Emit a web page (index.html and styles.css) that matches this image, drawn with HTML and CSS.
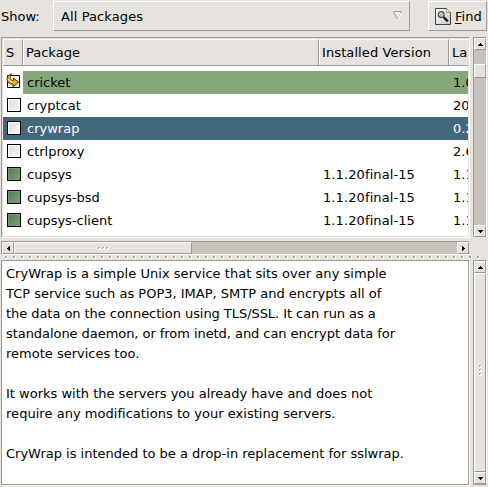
FILE: index.html
```html
<!DOCTYPE html>
<html lang="en">
<head>
<meta charset="utf-8">
<title>Packages</title>
<link rel="stylesheet" href="styles.css">
</head>
<body>
<header class="toolbar">
  <span class="label">Show:</span>
  <div class="combo raised"><span class="wide">All Packages</span>
    <svg class="drop" width="10" height="11" viewBox="0 0 10 11"><path d="M.5.5h8L4.5 8.7z" fill="#eeece8" stroke="#a39f97"/><path d="M4.5 9.5l4-8" stroke="#fff" fill="none"/></svg>
  </div>
  <button class="find raised">
    <svg width="18" height="19" viewBox="0 0 18 19">
      <defs><linearGradient id="paper" x2="1" y2="1"><stop stop-color="#fff"/><stop offset="1" stop-color="#c4c4c4"/></linearGradient></defs>
      <path d="M1.5 1.5h11l4 4v12h-15z" fill="url(#paper)" stroke="#45423c"/>
      <path d="M12.5 1.5v4h4" fill="#eee" stroke="#77736d" stroke-width=".7"/>
      <path d="M9.5 10l4.3 4.4" stroke="#161616" stroke-width="2.3"/>
      <circle cx="7.2" cy="7.6" r="3" fill="#b8bda6" stroke="#4e4e4a" stroke-width="1.1"/>
      <path d="M5.6 7.4l1.3-1.3" stroke="#fff"/>
    </svg>
    <span><u>F</u>ind</span>
  </button>
</header>
<main>
  <section class="pane list-pane">
    <div class="list">
      <div class="row head"><span>S</span><span>Package</span><span class="wide">Installed Version</span><span>Latest</span></div>
      <div class="rows">
        <div class="row upgrade"><span><svg class="up" width="17" height="17" viewBox="0 0 17 17"><path d="M2.5 3.5h12v12h-12z" fill="#eee" stroke="#000"/><path d="M6.5 1.8C1 3 .5 10 5.5 11.8L8 12v2.8l5.5-4.6L8.5 6v2.7C5 8.5 4 5 6.5 1.8z" fill="#e6ae27" stroke="#49350b"/><path d="M3.5 7c.5 2.2 2 3.2 5 3.2" fill="none" stroke="#ffe27b"/></svg></span><span>cricket</span><span></span><span>1.0.5</span></div>
        <div class="row"><span><i class="box"></i></span><span>cryptcat</span><span></span><span>20031202</span></div>
        <div class="row selected"><span><i class="box"></i></span><span>crywrap</span><span></span><span>0.2.1</span></div>
        <div class="row"><span><i class="box"></i></span><span>ctrlproxy</span><span></span><span>2.6.2</span></div>
        <div class="row"><span><i class="box on"></i></span><span>cupsys</span><span class="wide">1.1.20final-15</span><span>1.1.20</span></div>
        <div class="row"><span><i class="box on"></i></span><span>cupsys-bsd</span><span class="wide">1.1.20final-15</span><span>1.1.20</span></div>
        <div class="row"><span><i class="box on"></i></span><span>cupsys-client</span><span class="wide">1.1.20final-15</span><span>1.1.20</span></div>
      </div>
    </div>
    <div class="vbar">
      <div class="btn"><svg width="5" height="3"><path d="M2 0h1v1h1v1h1v1H0V2h1V1h1z"/></svg></div>
      <div class="gap"></div><div class="thumb"></div><div class="trough"></div>
      <div class="btn"><svg width="5" height="3"><path d="M0 0h5v1H4v1H3v1H2V2H1V1H0z"/></svg></div>
    </div>
  </section>
  <div class="hbar">
    <div class="btn"><svg width="3" height="5"><path d="M3 0v5H2V4H1V3H0V2h1V1h1V0z"/></svg></div>
    <div class="thumb"><i class="dot"></i><i class="dot"></i><i class="dot"></i></div><div class="trough"></div>
    <div class="btn"><svg width="3" height="5"><path d="M0 0v5h1V4h1V3h1V2H2V1H1V0z"/></svg></div>
  </div>
  <div class="splitter"></div>
  <section class="pane">
    <div class="description">
      <p><span class="loose">CryWrap is a simple Unix service that sits over any simple</span><br>TCP service such as POP3, IMAP, SMTP and encrypts all of<br><span class="tight">the data on the connection using TLS/SSL. It can run as a</span><br><span class="tight">standalone daemon, or from inetd, and can encrypt data for</span><br>remote services too.</p>
      <p>It works with the servers you already have and does not<br><span class="loose">require any modifications to your existing servers.</span></p>
      <p>CryWrap is intended to be a drop-in replacement for sslwrap.</p>
    </div>
    <div class="vbar full">
      <div class="btn"><svg width="5" height="3"><path d="M2 0h1v1h1v1h1v1H0V2h1V1h1z"/></svg></div>
      <div class="thumb"><i class="dot"></i><i class="dot"></i><i class="dot"></i></div>
      <div class="btn"><svg width="5" height="3"><path d="M0 0h5v1H4v1H3v1H2V2H1V1H0z"/></svg></div>
    </div>
  </section>
</main>
</body>
</html>
```
FILE: styles.css
```css
* { box-sizing: border-box; }
body {
  margin: 0; width: 488px; height: 487px; overflow: hidden;
  background: #e6e3de; color: #000;
  font: 13px/20px "DejaVu Sans", sans-serif;
}
svg { display: block; flex: none; }
.wide { letter-spacing: .1px; }
.loose { letter-spacing: .035px; }
.tight { letter-spacing: -.055px; }
.toolbar { display: flex; height: 37px; padding: 1px 1px 0 1px; align-items: flex-start; }
.label { width: 52px; line-height: 32px; }
.raised {
  height: 30px; border: 1px solid #fff;
  border-right-color: #9c9a94; border-bottom-color: #9c9a94;
  display: flex; align-items: center;
}
.combo { width: 357px; padding: 1px 6px 0 7px; justify-content: space-between; }
.drop { margin-top: -1px; }
.find { margin-left: 18px; width: 59px; padding: 1px 0 0 5px; gap: 3px; background: none; color: #000; font: inherit; }
.find svg { margin-top: -1px; }
.find u { text-underline-offset: 2px; }
main { padding-left: 1px; }
.pane { display: flex; gap: 3px; height: 226px; }
.list-pane { height: 201px; }
.list {
  width: 469px; background: #fff; overflow: hidden;
  border: 1px solid #9c9a94; border-right-color: #fff; border-bottom-color: #fff;
  box-shadow: inset 0 0 0 1px #e6e3de; padding: 1px;
}
.row { display: grid; grid-template-columns: 20px 296px 130px 19px; height: 23px; line-height: 23px; white-space: nowrap; }
.row span { overflow: hidden; padding-left: 4px; }
.head { height: 27px; line-height: 26px; background: #e6e3de; border-bottom: 1px solid #9c9a94; }
.head span { padding-left: 2px; border-left: 1px solid #fff; border-top: 1px solid #fff; border-right: 1px solid #9c9a94; line-height: 25px; }
.head span:last-child { border-right: 0; }
.rows { padding-top: 5px; }
.row span:first-child { padding-left: 4px; }
.head span:first-child { padding-left: 2px; }
.upgrade { background: linear-gradient(to right, #fff 20px, #86a77d 20px); }
.selected { background: #44687b; color: #fff; }
.box { display: block; width: 14px; height: 14px; margin-top: 4px; border: 1px solid #000; background: linear-gradient(135deg, #dcdcdc, #f8f8f8); box-shadow: inset 0 0 0 1px #fff; }
.box.on { background: linear-gradient(135deg, #577b51, #7ba176); box-shadow: inset 0 0 0 1px #739b6e; }
.row .up { margin: 1px 0 0 -2px; }
.vbar {
  width: 14px; display: flex; flex-direction: column; background: #c6c2bb;
  border: 1px solid #9c9a94; border-right: 1px solid #fff; border-bottom: 0;
}
.list-pane .vbar { height: 200px; }
.btn, .thumb {
  background: #e6e3de; border: 1px solid #fff;
  border-right-color: #9c9a94; border-bottom-color: #9c9a94;
  display: flex; align-items: center; justify-content: center;
}
.btn { flex: none; width: 12px; height: 12px; }
.gap { height: 14px; }
.list-pane .thumb { height: 14px; }
.trough { flex: 1; }
.full .thumb { flex: 1; flex-direction: column; gap: 1px; padding-bottom: 4px; }
.full { height: 225px; border-bottom: 1px solid #9c9a94; }
.dot { width: 3px; height: 3px; background: linear-gradient(#a9a59e, #a9a59e) 0 0 / 2px 1px no-repeat, linear-gradient(#a9a59e, #a9a59e) 0 0 / 1px 2px no-repeat, #fff; }
.hbar { display: flex; width: 468px; height: 14px; margin-top: 3px; background: #c6c2bb; border: 1px solid #9c9a94; border-right: 0; border-bottom-color: #fff; }
.hbar .thumb { width: 178px; gap: 1px; }
.splitter {
  height: 3px; margin: 1px 0 1px 4px; width: 475px;
  background:
    repeating-linear-gradient(to right, #a9a59e 0 2px, transparent 2px 8px) 0 0 / 100% 2px no-repeat,
    repeating-linear-gradient(to right, #fff 0 3px, transparent 3px 8px);
}
.description {
  width: 469px; background: #fff; border: 1px solid #9c9a94;
  border-right: 1px solid #fff; border-bottom: 1px solid #fff;
  box-shadow: inset -1px -1px #9c9a94; padding: 3px 4px 0;
}
.description p { margin: 0 0 20px; white-space: nowrap; }
```
